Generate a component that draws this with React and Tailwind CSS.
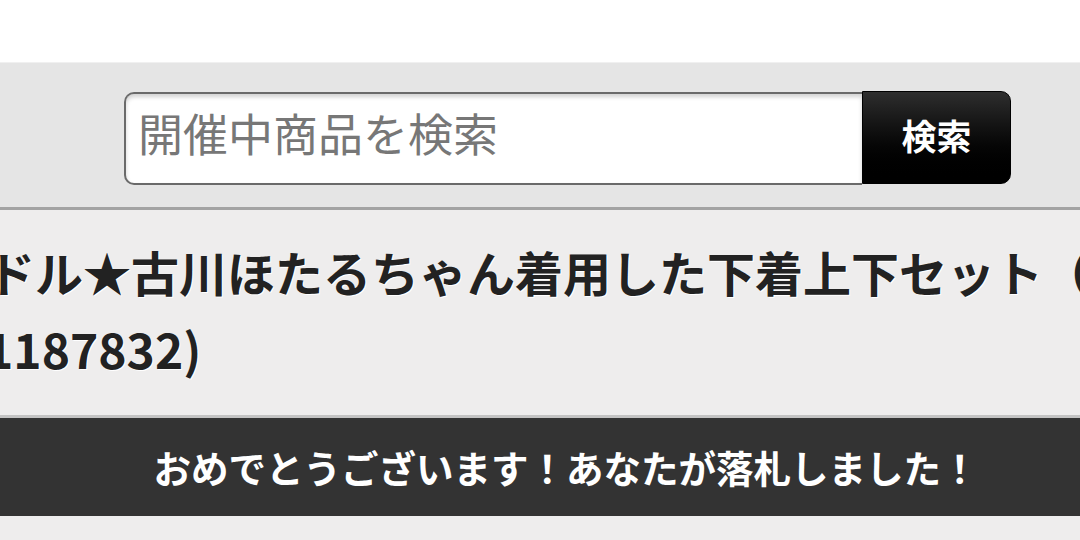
export default function App() {
  const jp = { fontFamily: '"Noto Sans CJK JP", "Noto Sans", sans-serif' };
  return (
    <div className="w-[1080px] h-[540px] overflow-hidden bg-[#eeeded]" style={jp}>
      <div className="h-[62px] bg-white" />
      <div className="h-[148px] bg-[#e5e5e5] border-t border-[#f0f0f0] border-b-[3px] border-b-[#a3a3a3] flex items-start pt-[29px] pl-[124px]">
        <div className="flex h-[93px]">
          <div className="w-[738px] h-[93px] bg-white border-2 border-[#6a6a6a] border-r-0 rounded-l-[10px] shadow-[inset_0_3px_4px_rgba(0,0,0,0.18)] flex items-center pl-[12px] pb-[12px]">
            <span className="text-[45px] text-[#777777] leading-none">開催中商品を検索</span>
          </div>
          <button className="w-[149px] h-[93px] -mt-px rounded-r-[10px] border border-black bg-gradient-to-b from-[#2e2e2e] to-[#000000] text-white font-bold text-[35px] leading-none flex items-center justify-center pb-[6px]">
            検索
          </button>
        </div>
      </div>
      <div className="h-[205px] overflow-hidden bg-[#eeeded] pt-[23px] text-[#222222] font-bold text-[48px] leading-[77px] [text-shadow:1px_1px_0_#ffffff]">
        <div className="whitespace-nowrap -ml-[13px]">ドル★古川ほたるちゃん着用した下着上下セット（</div>
        <div className="whitespace-nowrap -ml-[15px]">1187832)</div>
      </div>
      <div className="h-[3px] bg-[#c3c3c3]" />
      <div className="h-[98px] bg-[#333333] flex items-center justify-center pl-[52px]">
        <span className="text-white font-bold text-[37.5px] leading-none whitespace-nowrap">おめでとうございます！あなたが落札しました！</span>
      </div>
      <div className="h-[24px] bg-[#eeeded]" />
    </div>
  );
}
